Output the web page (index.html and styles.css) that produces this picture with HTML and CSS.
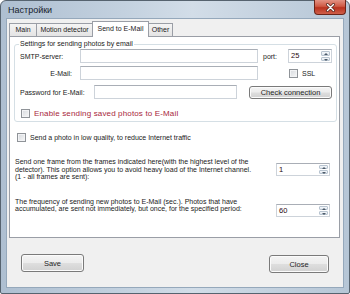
FILE: index.html
```html
<!DOCTYPE html>
<html lang="en">

<head>
    <meta charset="UTF-8">
    <title>Настройки</title>
    <link rel="stylesheet" href="styles.css">
</head>

<body>
    <div class="window">
        <div class="titlebar">
            <span class="title">Настройки</span>
            <div class="close-x">
                <svg width="13" height="9" viewBox="0 0 13 9">
                    <path d="M3.5 1.5 L9.5 7.5 M9.5 1.5 L3.5 7.5" stroke="#5a2a22" stroke-width="3" stroke-linecap="round" />
                    <path d="M3.5 1.5 L9.5 7.5 M9.5 1.5 L3.5 7.5" stroke="#ffffff" stroke-width="1.4" stroke-linecap="round" />
                </svg>
            </div>
        </div>

        <div class="client">
            <div class="tabs">
                <div class="tab tab-main">Main</div>
                <div class="tab tab-motion">Motion detector</div>
                <div class="tab tab-email active">Send to E-Mail</div>
                <div class="tab tab-other">Other</div>
            </div>

            <div class="panel">
                <fieldset class="group">
                    <legend>Settings for sending photos by email</legend>

                    <div class="row row-smtp">
                        <label class="lbl lbl-wide">SMTP-server:</label>
                        <div class="field field-long"></div>
                        <label class="lbl lbl-port">port:</label>
                        <div class="spin spin-port">
                            <span class="spin-value">25</span>
                            <div class="spin-arrows"><div class="arrow up"></div><div class="arrow down"></div></div>
                        </div>
                    </div>

                    <div class="row row-mail">
                        <label class="lbl lbl-wide lbl-right">E-Mail:</label>
                        <div class="field field-long"></div>
                        <span class="check check-ssl"></span>
                        <span class="check-text">SSL</span>
                    </div>

                    <div class="row row-pass">
                        <label class="lbl lbl-pass">Password for E-Mail:</label>
                        <div class="field field-pass"></div>
                        <button class="btn btn-check">Check connection</button>
                    </div>

                    <div class="row row-enable">
                        <span class="check check-enable"></span>
                        <span class="check-text enable-text">Enable sending saved photos to E-Mail</span>
                    </div>
                </fieldset>

                <div class="row row-quality">
                    <span class="check check-quality"></span>
                    <span class="check-text">Send a photo in low quality, to reduce Internet traffic</span>
                </div>

                <div class="option option-frames">
                    <p class="note">Send one frame from the frames indicated here(with the highest level of the<br>detector). This option allows you to avoid heavy load of the Internet channel.<br>(1 - all frames are sent):</p>
                    <div class="spin spin-side">
                        <span class="spin-value">1</span>
                        <div class="spin-arrows"><div class="arrow up"></div><div class="arrow down"></div></div>
                    </div>
                </div>

                <div class="option option-freq">
                    <p class="note">The frequency of sending new photos to E-Mail (sec.). Photos that have<br>accumulated, are sent not immediately, but once, for the specified period:</p>
                    <div class="spin spin-side spin-low">
                        <span class="spin-value">60</span>
                        <div class="spin-arrows"><div class="arrow up"></div><div class="arrow down"></div></div>
                    </div>
                </div>
            </div>

            <div class="footer">
                <button class="btn btn-save">Save</button>
                <button class="btn btn-close">Close</button>
            </div>
        </div>
    </div>
</body>

</html>
```

FILE: styles.css
```css
* {
    box-sizing: border-box;
}

body {
    margin: 0;
    font-family: 'Liberation Sans', Arial, sans-serif;
    font-size: 7px;
    color: #1a1a1a;
    background-color: #ffffff;
}

.window {
    width: 350px;
    height: 294px;
    display: flex;
    flex-direction: column;
    border: 1px solid #56636f;
    border-radius: 6px 6px 2px 2px;
    padding: 0 6px 6px 6px;
    background: linear-gradient(to right, #aebfd1 0%, #c3d1df 35%, #d2dde8 55%, #b6c6d6 100%);
}

.titlebar {
    height: 18px;
    margin: 0 -6px;
    padding-left: 7px;
    display: flex;
    justify-content: space-between;
    align-items: center;
}

.title {
    font-size: 9px;
    color: #17212b;
}

.close-x {
    align-self: flex-start;
    width: 32px;
    height: 15px;
    margin-top: -1px;
    margin-right: 3px;
    display: flex;
    align-items: center;
    justify-content: center;
    border: 1px solid #6b2419;
    border-top: none;
    border-radius: 0 0 4px 4px;
    background: linear-gradient(#e39384 0%, #cf5a45 45%, #b9321e 55%, #cf5f4a 100%);
}

.client {
    flex: 1;
    display: flex;
    flex-direction: column;
    padding: 2px 3px 0 2px;
    background-color: #f0f0f0;
    box-shadow: 0 0 0 1px #95a8bb;
}

/* tab strip */
.tabs {
    display: flex;
    align-items: flex-end;
    height: 15px;
}

.tab {
    height: 13px;
    line-height: 12px;
    text-align: center;
    border: 1px solid #9a9ea6;
    border-bottom: none;
    background: linear-gradient(#f4f4f4, #e4e4e4);
    white-space: nowrap;
}

.tab + .tab {
    margin-left: -1px;
}

.tab-main {
    width: 28px;
}

.tab-motion {
    width: 57px;
}

.tab-email {
    width: 57px;
}

.tab-other {
    width: 25px;
}

.tab.active {
    position: relative;
    z-index: 1;
    height: 16px;
    margin-bottom: -1px;
    line-height: 14px;
    background: #ffffff;
}

/* tab page */
.panel {
    height: 202px;
    border: 1px solid #9a9ea6;
    background-color: #ffffff;
    padding: 3px 2px 0 4px;
}

.group {
    margin: 0;
    min-width: 0;
    padding: 1px 4px 3px 5px;
    border: 1px solid #d5dfe5;
    border-radius: 3px;
}

.group legend {
    padding: 0 1px;
    margin-left: -1px;
    line-height: 8px;
}

.row {
    display: flex;
    align-items: center;
}

.row-smtp,
.row-mail,
.row-pass {
    height: 14px;
}

.row-mail {
    margin-top: 3px;
}

.row-pass {
    margin-top: 5px;
}

.row-enable {
    height: 10px;
    margin-top: 9px;
}

.lbl {
    flex: none;
    white-space: nowrap;
}

.lbl-wide {
    width: 60px;
}

.lbl-right {
    text-align: right;
    padding-right: 8px;
}

.lbl-port {
    width: 25px;
    margin-left: 5px;
}

.lbl-pass {
    width: 74px;
}

.field {
    height: 14px;
    border: 1px solid #cdd3da;
    border-top-color: #a9aeb6;
    background-color: #ffffff;
}

.field-long {
    width: 178px;
}

.field-pass {
    width: 143px;
}

/* numeric up-down */
.spin {
    display: flex;
    height: 14px;
    border: 1px solid #cdd3da;
    border-top-color: #a9aeb6;
    background-color: #ffffff;
}

.spin-port {
    width: 44px;
}

.spin-side {
    width: 54px;
    height: 13px;
    margin-left: auto;
}

.spin-low {
    align-self: flex-start;
    margin-top: 6px;
}

.spin-value {
    flex: 1;
    padding-left: 2px;
    font-size: 7.5px;
    line-height: 11px;
    color: #2a0a10;
}

.spin-arrows {
    width: 10px;
    display: flex;
    flex-direction: column;
    gap: 1px;
    padding: 1px 1px 1px 0;
}

.arrow {
    flex: 1;
    position: relative;
    border: 1px solid #b8c4d0;
    border-radius: 1px;
    background: linear-gradient(#f5f8fb, #dfe6ee);
}

.arrow::before {
    content: '';
    position: absolute;
    left: 2px;
    top: 1px;
    border-style: solid;
    border-color: transparent;
}

.arrow.up::before {
    border-width: 0 2px 2px 2px;
    border-bottom-color: #4d5a68;
}

.arrow.down::before {
    border-width: 2px 2px 0 2px;
    border-top-color: #4d5a68;
}

/* check boxes */
.check {
    flex: none;
    width: 9px;
    height: 9px;
    border: 1px solid #8f9398;
    background: linear-gradient(135deg, #d6d9de, #f7f7f7);
    box-shadow: inset 0 0 0 1px #f2f3f5;
}

.check-text {
    margin-left: 4px;
    white-space: nowrap;
}

.check-ssl {
    margin-left: 31px;
    margin-top: 1px;
}

.check-enable {
    margin-left: 1px;
}

.enable-text {
    font-size: 8px;
    letter-spacing: 0.15px;
    color: #a81f3c;
}

.row-quality {
    height: 9px;
    margin-top: 11px;
    padding-left: 3px;
}

/* option paragraphs with a number on the right */
.option {
    display: flex;
    align-items: center;
    padding: 0 7px 0 1px;
}

.option-frames {
    margin-top: 16px;
}

.option-freq {
    align-items: flex-start;
    margin-top: 17px;
}

.note {
    margin: 0;
    line-height: 7.6px;
    white-space: nowrap;
}

/* buttons */
.btn {
    font-family: 'Liberation Sans', Arial, sans-serif;
    font-size: 7.5px;
    color: #1e1e1e;
    padding: 0;
    border: 1px solid #7a7a7a;
    border-radius: 3px;
    background: linear-gradient(#f4f4f4 0%, #ececec 48%, #dedede 52%, #d1d1d1 100%);
    box-shadow: inset 0 0 0 1px #fbfbfb;
}

.btn-check {
    width: 83px;
    height: 13px;
    margin-left: 12px;
}

.footer {
    display: flex;
    justify-content: space-between;
    align-items: flex-start;
    padding: 16px 11px 0 12px;
}

.btn-save {
    width: 63px;
    height: 18px;
}

.btn-close {
    width: 60px;
    height: 18px;
    margin-top: 1px;
}
```
